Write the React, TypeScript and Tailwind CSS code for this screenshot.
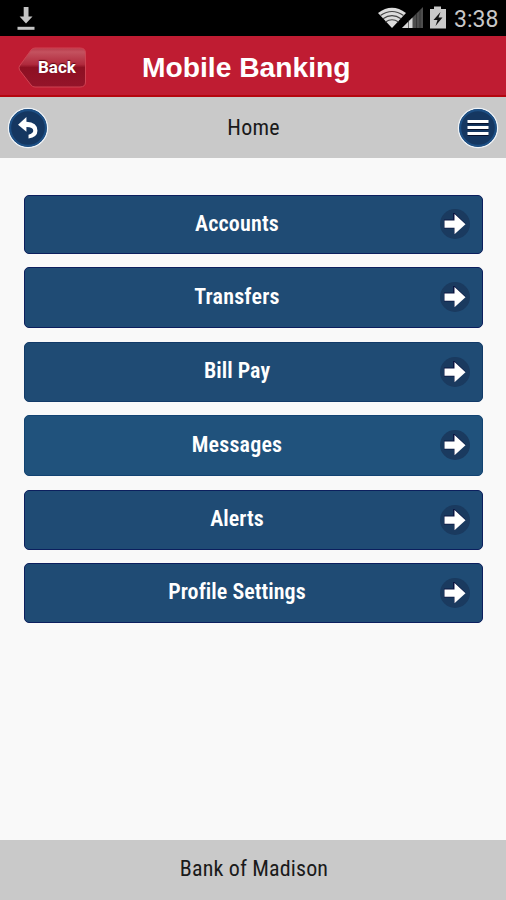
import React from 'react';
import clsx from 'clsx';

interface MenuItem {
  label: string;
  className: string;
}

const menuItems: MenuItem[] = [
  { label: "Accounts", className: "h-[59px] mb-[13px] bg-[#1f4b74] border-[#0c1f5e] tracking-[0.2px]" },
  { label: "Transfers", className: "h-[61px] mb-[14px] bg-[#1f4b74] border-[#0c1f5e] tracking-[0.2px]" },
  { label: "Bill Pay", className: "h-[60px] mb-[13px] bg-[#1f4b74] border-[#123a68] tracking-[0.05px]" },
  { label: "Messages", className: "h-[61px] mb-[14px] bg-[#20527c] border-[#124372] tracking-[0.2px]" },
  { label: "Alerts", className: "h-[60px] mb-[13px] bg-[#1f4b74] border-[#0c1f5e] tracking-[0.05px]" },
  { label: "Profile Settings", className: "h-[60px] bg-[#1f4b74] border-[#0c1f5e] tracking-[0.05px]" },
];

const StatusBar: React.FC = () => (
  <div className="h-9 shrink-0 bg-black flex items-center justify-between pl-[17px] pr-[8px]">
    <svg width="18" height="24" viewBox="0 0 18 24" fill="#c4c4c4">
      <path d="M6.7 1h4.8v9.5h4L9 17.5 2.6 10.5h4.1z" />
      <rect x="0.5" y="20.800" width="17" height="3" />
    </svg>
    <div className="flex items-center">
      <svg width="72" height="28" viewBox="0 0 72 28">
        {/* Wifi fan */}
        <path d="M1 9Q15 -1.500 29 9L15 24z" fill="#dcdcdc" />
        <g fill="none" stroke="#444" strokeWidth="1.200">
          <path d="M3.500 11.500Q15 3.500 26.500 11.500" />
          <path d="M6 14.800Q15 8.500 24 14.800" />
          <path d="M8.500 18Q15 13.500 21.500 18" />
        </g>
        {/* Cell signal */}
        <path d="M46 3V24H25z" fill="#4d4d4d" />
        <path d="M35.500 13.500V24H25z" fill="#d8d8d8" />
        <path d="M31.500 16V24M39.500 9V24M43 6V24" stroke="#222" strokeWidth="0.600" />
        {/* Battery */}
        <path d="M57 2.500h7v2.500h5v19.500H53V5h4z" fill="#c9c9c9" />
        <path d="M63.500 8l-7 8h4l-2 6 7-8.500h-4z" fill="#111" />
      </svg>
      <span className="ml-[5px] mt-[3px] w-[44px] text-[23px] leading-[36px] text-[#c8c8c8] whitespace-nowrap">3:38</span>
    </div>
  </div>
);

const BackButton: React.FC = () => (
  <button className="relative w-[70px] h-[42px]">
    <svg width="70" height="42" viewBox="0 0 70 42" className="block">
      <defs>
        <linearGradient id="back" x1="0" y1="0" x2="0" y2="1">
          <stop offset="0" stopColor="#b83a4b" />
          <stop offset="0.1" stopColor="#c4525f" />
          <stop offset="0.42" stopColor="#b02a3d" />
          <stop offset="0.5" stopColor="#8d1022" />
          <stop offset="1" stopColor="#94142a" />
        </linearGradient>
      </defs>
      <path d="M17 1H62Q67.500 1 67.500 6V35Q67.500 40 62 40H17Q14.500 40 13 38L1.500 23Q0.500 20.500 1.500 19L13 3Q14.500 1 17 1z" fill="url(#back)" stroke="#cf4252" strokeWidth="1" />
    </svg>
    <span className="absolute left-[20px] top-[10px] text-[17px] leading-5 font-bold text-white [text-shadow:0_-1px_1px_#5a0612]">Back</span>
  </button>
);

const RoundIcon: React.FC<{ children: React.ReactNode }> = ({ children }) => (
  <button className="w-[42px] h-[42px]">
    <svg width="42" height="42" viewBox="0 0 40 40" className="block">
      <circle cx="20" cy="20" r="18.500" fill="#153761" stroke="#eff3f7" strokeWidth="1.500" />
      <circle cx="20" cy="20" r="17" fill="none" stroke="#1d4f84" strokeWidth="2" />
      {children}
    </svg>
  </button>
);

const ArrowIcon: React.FC = () => (
  <svg width="32" height="32" viewBox="0 0 32 32" className="block">
    <circle cx="16" cy="16" r="15" fill="#1a3a5f" />
    <path d="M5 11.500H14V5L15.500 5 26.500 15.500 15 26.500V20.500H5z" fill="#0c1642" />
    <path d="M5.500 12.500H15.500V6L26.500 16.200 15.500 26.200V19.700H5.500z" fill="#fff" />
  </svg>
);

const App: React.FC = () => {
  return (
    <div className="w-[506px] h-[900px] flex flex-col bg-[#f9f9f9] overflow-hidden font-['Roboto',sans-serif]">
      <StatusBar />

      <header className="h-[61px] shrink-0 bg-[#bf1c32] border-b-2 border-[#b5060f] flex items-center pl-[18px] pt-[4px]">
        <BackButton />
        <h1 className="ml-[54px] mt-px text-[27px] leading-8 font-bold text-white font-['Liberation_Sans',sans-serif] whitespace-nowrap origin-left scale-x-[1.045]">
          Mobile Banking
        </h1>
      </header>

      <nav className="h-[61px] shrink-0 bg-[#c9c9c9] flex items-center justify-between pl-[7px] pr-[7px]">
        <RoundIcon>
          <path d="M10.500 17l8-7.500v4.500q10.500 0.500 10.500 8.500 0 6-8.500 7.500v-3.500q4.500-1.500 4.500-4 0-3.500-6.500-3.500v4.500z" fill="#fff" />
        </RoundIcon>
        <span className="pl-px text-[22px] leading-7 tracking-[0.2px] text-[#1a1a1a] font-['Roboto_Condensed','Roboto',sans-serif]">Home</span>
        <RoundIcon>
          <path d="M10 15.500h20M10 21h20M10 26.500h20" stroke="#06122e" strokeWidth="2" />
          <path d="M10 13.800h20M10 19.500h20M10 25.200h20" stroke="#fff" strokeWidth="2.800" />
        </RoundIcon>
      </nav>

      <main className="grow flex flex-col pt-[36.500px] pl-6 pr-[23px]">
        {menuItems.map((item) => (
          <button
            key={item.label}
            className={clsx("shrink-0 flex items-center rounded-[5px] border pr-[11px]", item.className)}
          >
            <span className="grow pl-[10px] mb-px text-center text-[22px] leading-7 font-semibold text-white font-['Roboto_Condensed','Roboto',sans-serif]">
              {item.label}
            </span>
            <ArrowIcon />
          </button>
        ))}
      </main>

      <footer className="h-[60px] shrink-0 bg-[#c9c9c9] flex items-center justify-center">
        <span className="pl-[2px] mb-[2px] text-[22px] leading-7 tracking-[0.15px] text-[#1a1a1a] font-['Roboto_Condensed','Roboto',sans-serif]">Bank of Madison</span>
      </footer>
    </div>
  );
};

export default App;
